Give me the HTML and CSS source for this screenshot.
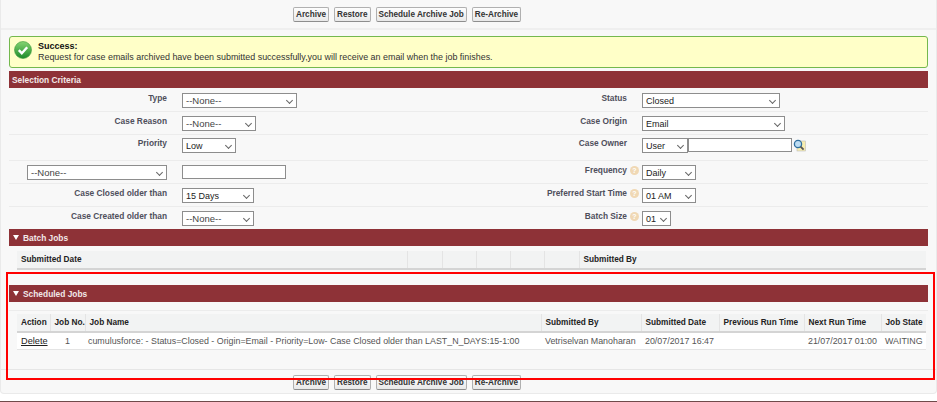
FILE: index.html
```html
<!DOCTYPE html>
<html lang="en">
<head>
<meta charset="utf-8">
<title>Case Email Archive</title>
<link rel="stylesheet" href="styles.css">
</head>
<body>
<main class="panel">
  <div class="buttons buttons-top">
    <button class="btn">Archive</button><button class="btn">Restore</button><button class="btn">Schedule Archive Job</button><button class="btn">Re-Archive</button>
  </div>
  <div class="content">
    <div class="message">
      <svg class="check" width="18" height="18" viewBox="0 0 18 18"><defs><linearGradient id="g" x1="0" y1="0" x2="0" y2="1"><stop offset="0" stop-color="#86d472"/><stop offset="1" stop-color="#1c8a2a"/></linearGradient></defs><circle cx="9" cy="9" r="8.5" fill="url(#g)" stroke="#3c9a3c" stroke-width=".6"/><path d="M4.8 9.2l3 3 5.4-6" fill="none" stroke="#fff" stroke-width="2.4"/></svg>
      <div class="message-text"><strong>Success:</strong><span>Request for case emails archived have been submitted successfully,you will receive an email when the job finishes.</span></div>
    </div>
    <h2 class="bar">Selection Criteria</h2>
    <div class="row r-first">
      <label class="lbl">Type</label><div class="ctl"><span class="sel w115">--None--</span></div>
      <label class="lbl">Status</label><div class="ctl"><span class="sel w138 dark">Closed</span></div>
    </div>
    <div class="row r1">
      <label class="lbl">Case Reason</label><div class="ctl"><span class="sel w74">--None--</span></div>
      <label class="lbl">Case Origin</label><div class="ctl"><span class="sel w143 dark">Email</span></div>
    </div>
    <div class="row r2">
      <label class="lbl">Priority</label><div class="ctl"><span class="sel w54 dark">Low</span></div>
      <label class="lbl">Case Owner</label><div class="ctl"><span class="sel w46 dark">User</span><span class="txt w104"></span>
        <svg class="lookup" width="13" height="13" viewBox="0 0 13 13"><rect x="4" y="2" width="8.5" height="10" fill="#f7edb0" stroke="#bbb" stroke-width=".6"/><circle cx="5" cy="5" r="3.6" fill="#bcdcf2" stroke="#2f6f9f" stroke-width="1.3"/><path d="M7.6 7.6l3 3" stroke="#555" stroke-width="1.8"/></svg></div>
    </div>
    <div class="row r1">
      <div class="lbl-ctl"><span class="sel w140">--None--</span></div><div class="ctl"><span class="txt w104"></span></div>
      <label class="lbl">Frequency<i class="help">?</i></label><div class="ctl"><span class="sel w54 dark">Daily</span></div>
    </div>
    <div class="row r1">
      <label class="lbl">Case Closed older than</label><div class="ctl"><span class="sel w72 dark">15 Days</span></div>
      <label class="lbl">Preferred Start Time<i class="help">?</i></label><div class="ctl"><span class="sel w54 dark">01 AM</span></div>
    </div>
    <div class="row r-last">
      <label class="lbl">Case Created older than</label><div class="ctl"><span class="sel w72">--None--</span></div>
      <label class="lbl">Batch Size<i class="help">?</i></label><div class="ctl"><span class="sel w29 dark">01</span></div>
    </div>
    <h2 class="bar bar-flush"><i class="tri"></i>Batch Jobs</h2>
    <table class="grid batch">
      <thead><tr><th class="b1">Submitted Date</th><th class="b2"></th><th class="b3"></th><th class="b3"></th><th class="b3"></th><th class="b2"></th><th>Submitted By</th></tr></thead>
    </table>
    <h2 class="bar bar-sched"><i class="tri"></i>Scheduled Jobs</h2>
    <div class="rule"></div>
    <table class="grid sched">
      <thead><tr><th class="c1">Action</th><th class="c2">Job No.</th><th class="c3">Job Name</th><th class="c4">Submitted By</th><th class="c5">Submitted Date</th><th class="c6">Previous Run Time</th><th class="c7">Next Run Time</th><th>Job State</th></tr></thead>
      <tbody><tr><td class="del"><a href="#">Delete</a></td><td class="ctr">1</td><td class="jn">cumulusforce: - Status=Closed - Origin=Email - Priority=Low- Case Closed older than LAST_N_DAYS:15-1:00</td><td>Vetriselvan Manoharan</td><td>20/07/2017 16:47</td><td></td><td>21/07/2017 01:00</td><td>WAITING</td></tr></tbody>
    </table>
  </div>
  <div class="buttons buttons-bottom">
    <button class="btn">Archive</button><button class="btn">Restore</button><button class="btn">Schedule Archive Job</button><button class="btn">Re-Archive</button>
  </div>
</main>
<div class="highlight"></div>
<div class="footer-line"></div>
</body>
</html>
```
FILE: styles.css
```css
* { box-sizing: border-box; }
html, body { margin: 0; height: 402px; overflow: hidden; background: #fff; }
body { position: relative; font-family: "Liberation Sans", Arial, sans-serif; font-size: 9px; color: #333; }
.panel { height: 394px; background: #f8f8f8; border: 1px solid #eaeaea; border-top: 0; border-radius: 0 0 4px 4px; }
.buttons { display: flex; gap: 5px; padding-left: 292px; }
.buttons-top { height: 30px; padding-top: 7px; border-bottom: 2px solid #efefef; }
.buttons-bottom { height: 24px; padding-top: 5px; border-top: 1px solid #e6e6e6; }
.btn { height: 15px; padding: 0 2px; border: 1px solid #b0b0b0; border-bottom-color: #8e8e8e; border-radius: 2px; background: linear-gradient(#fdfdfd, #e9e9e9); font: bold 8.2px "Liberation Sans", Arial, sans-serif; color: #333; white-space: nowrap; }
.content { margin: 0 8px; height: 339px; padding-top: 6px; }
.message { display: flex; align-items: flex-start; gap: 6px; height: 32px; padding: 4px; border: 1px solid #74b84e; border-radius: 3px; background: #ffffc8; }
.check { flex: none; }
.message-text { display: flex; flex-direction: column; gap: 1px; font-size: 8.94px; line-height: 10px; color: #333; }
.message-text strong { color: #111; font-size: 9px; }
.bar { display: flex; align-items: center; height: 17px; margin: 3px 0 0; padding-left: 3px; background: #8e3237; color: #f2e8e8; font-size: 8.4px; font-weight: bold; }
.bar-flush { margin-top: 0; }
.bar-sched { margin-top: 15px; }
.tri { width: 0; height: 0; margin: 0 4px 0 1px; border: 3px solid transparent; border-top: 5px solid #fff; border-bottom: 0; }
.row { display: grid; grid-template-columns: 158px 285px 145px 1fr; column-gap: 15px; align-items: start; border-bottom: 1px solid #ececec; }
.r-first { height: 24px; padding-top: 5px; }
.r1 { height: 23px; padding-top: 4px; }
.r2 { height: 26px; padding-top: 3px; }
.r-last { height: 22px; padding-top: 4px; border-bottom: 0; }
.lbl { display: flex; justify-content: flex-end; align-items: center; gap: 3px; font-size: 8.35px; font-weight: bold; color: #4f4f5c; line-height: 10px; }
.help { display: block; flex: none; width: 9px; height: 9px; margin-right: -12px; border-radius: 50%; background: #f0d8b4; color: #fff; font-size: 7px; font-style: normal; line-height: 9px; text-align: center; }
.lbl-ctl { display: flex; justify-content: flex-end; }
.ctl { display: flex; align-items: flex-start; }
.sel { position: relative; display: block; height: 15px; padding: 1px 0 0 3px; border: 1px solid #8d8d8d; background: #fff; color: #444; font-size: 9.5px; line-height: 12px; }
.sel.dark { color: #222; font-size: 9px; }
.sel::after { content: ""; position: absolute; top: 4px; right: 4px; width: 4px; height: 4px; border-right: 1px solid #666; border-bottom: 1px solid #666; transform: rotate(45deg); }
.txt { display: block; height: 14px; border: 1px solid #8d8d8d; background: #fff; }
.w29 { width: 29px; } .w46 { width: 46px; } .w54 { width: 54px; } .w72 { width: 72px; } .w74 { width: 74px; }
.w104 { width: 104px; } .w115 { width: 115px; } .w138 { width: 138px; } .w140 { width: 140px; } .w143 { width: 143px; }
.lookup { margin: 1px 0 0 1px; }
.grid { width: 909px; margin-left: 8px; border-collapse: collapse; table-layout: fixed; background: #fff; }
.grid th { height: 18px; padding: 0 4px; background: #f2f3f3; border-bottom: 2px solid #d4d4d4; border-left: 1px solid #e4e4e4; color: #222; font-size: 8.25px; font-weight: bold; text-align: left; white-space: nowrap; }
.grid th:first-child, .grid td:first-child { border-left: 0; }
.grid td { height: 17px; padding: 0 4px; border-bottom: 1px solid #e4e4e4; color: #555; font-size: 8.87px; white-space: nowrap; }
.grid td.jn { padding-left: 3px; }
.grid td.del { font-size: 9.2px; }
.grid a { color: #222; }
.grid .ctr { text-align: center; }
.batch { margin-top: 5px; }
.b1 { width: 390px; }
.b2 { width: 35px; }
.b3 { width: 34px; }
.rule { height: 9px; border-bottom: 1px solid #ececec; margin-bottom: 3px; }
.c1 { width: 33px; } .c2 { width: 35px; } .c3 { width: 456px; } .c4 { width: 100px; } .c5 { width: 78px; } .c6 { width: 85px; } .c7 { width: 77px; }
.highlight { position: absolute; left: 6px; top: 272px; width: 929px; height: 108px; border: 2px solid #f00; }
.footer-line { position: absolute; left: 0; right: 0; top: 401px; height: 1px; background: #6f4a4a; }
```
